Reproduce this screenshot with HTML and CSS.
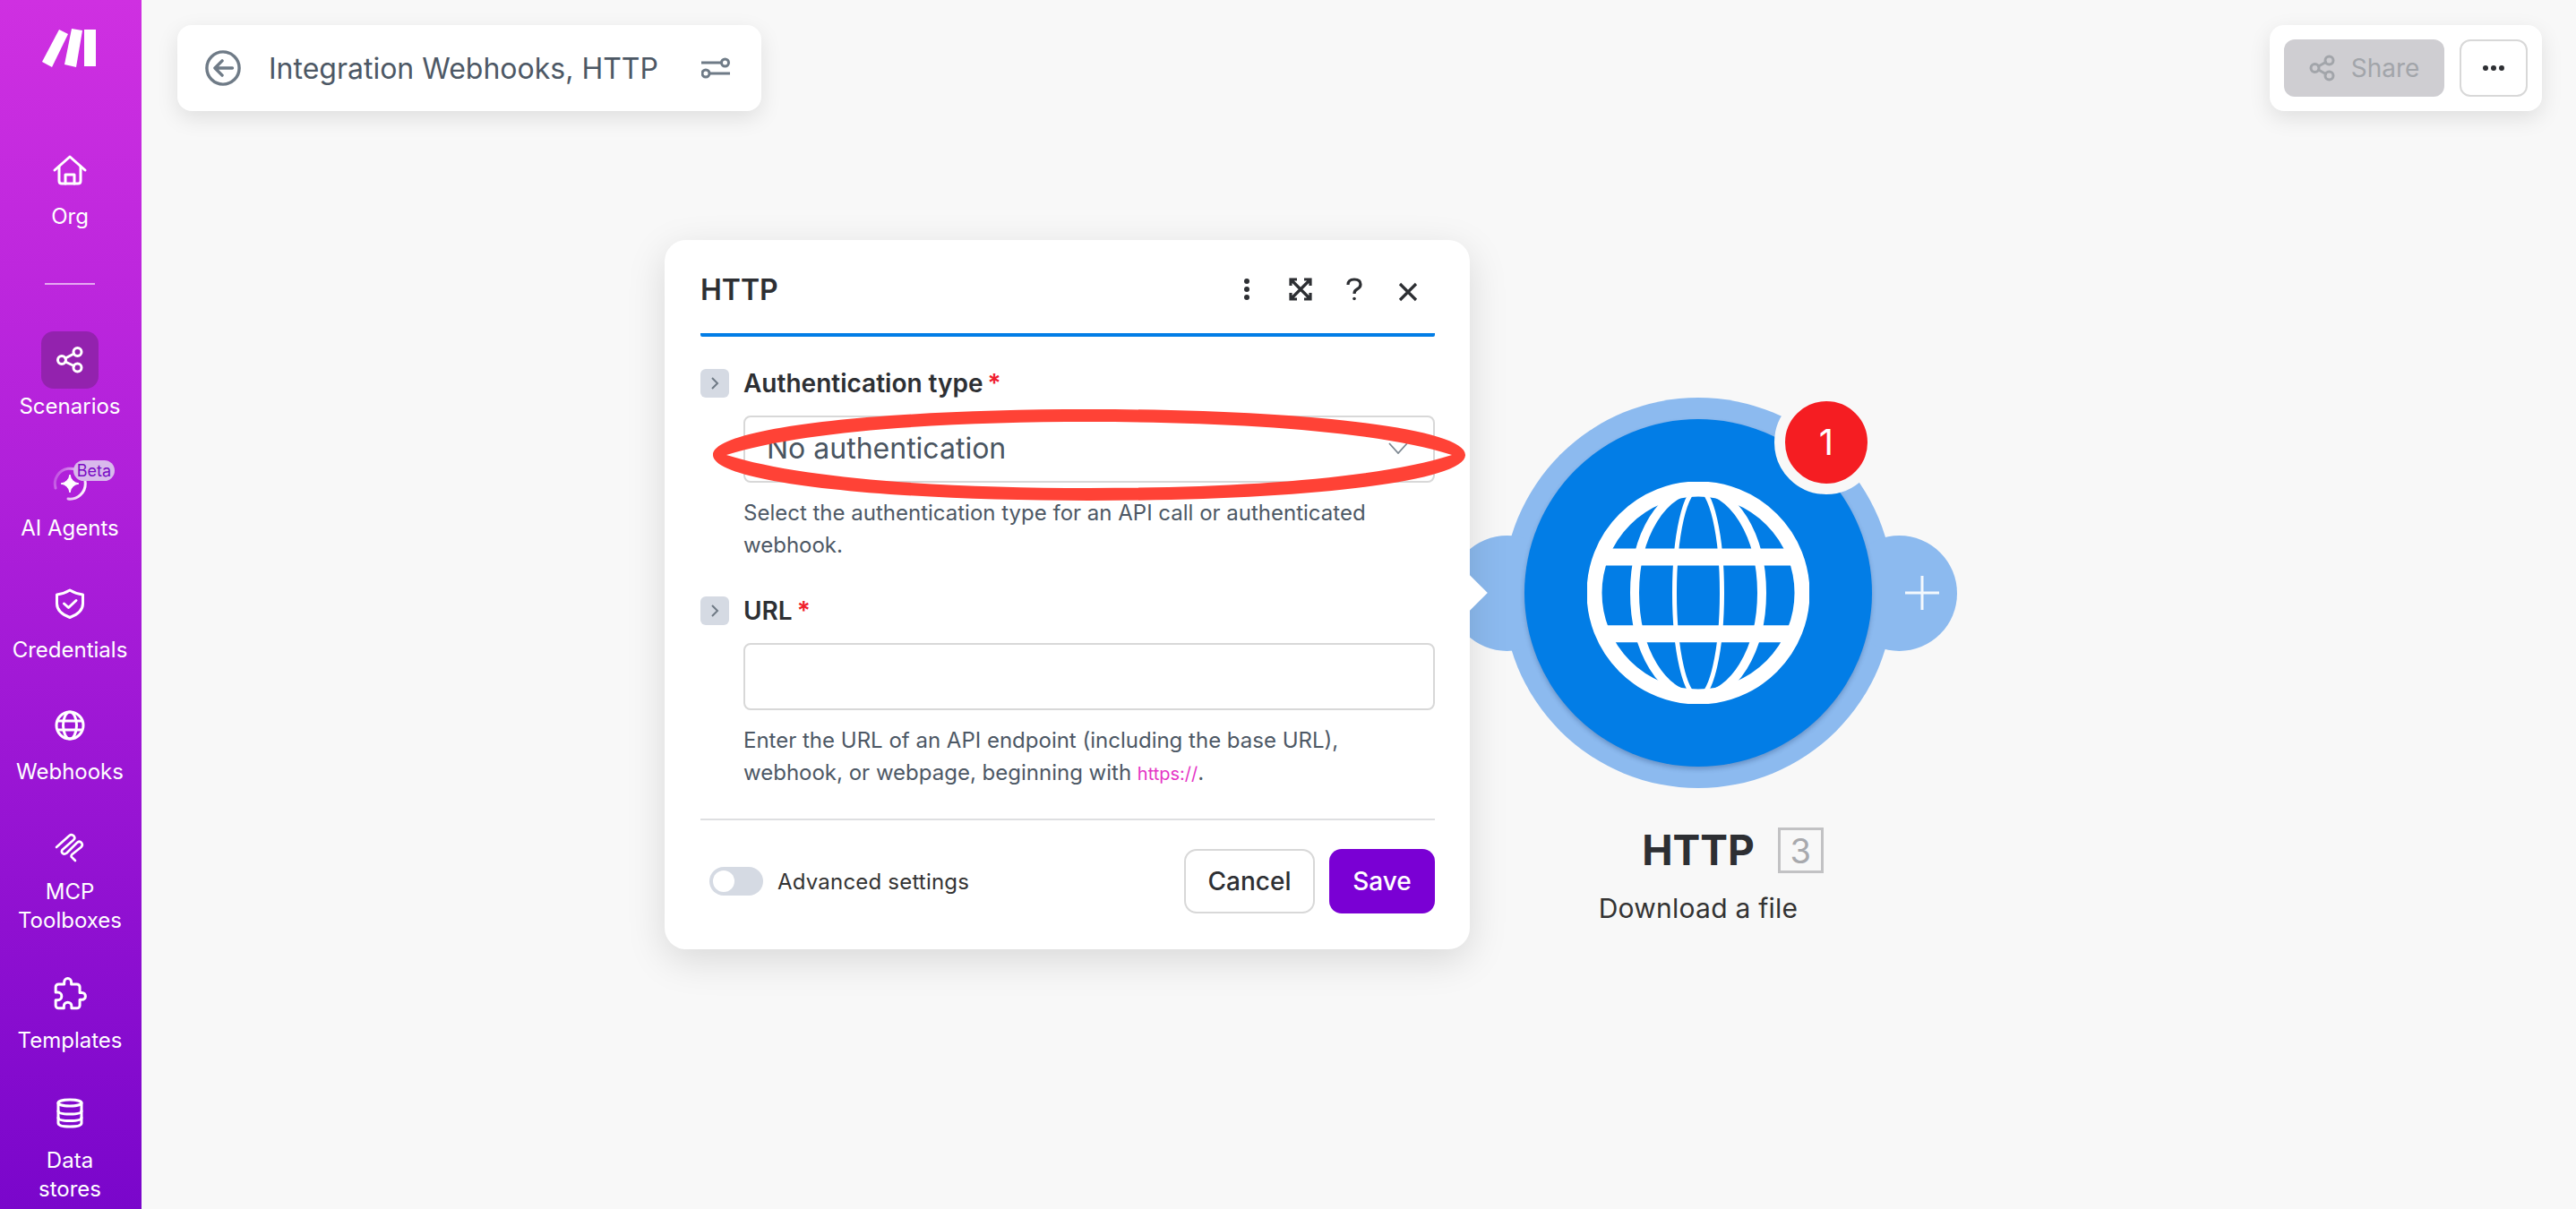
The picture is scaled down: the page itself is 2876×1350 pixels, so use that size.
FILE: index.html
```html
<!DOCTYPE html>
<html lang="en">
<head>
    <meta charset="UTF-8">
    <title>Integration Webhooks, HTTP</title>
    <link rel="stylesheet" href="styles.css">
</head>
<body>
    <aside class="sidebar">
        <svg class="logo" width="64" height="52" viewBox="0 0 64 52" fill="#fff">
            <polygon points="20,5 30,10 12,47 1,41"/>
            <polygon points="34,4 46,6 39,47 26,44"/>
            <polygon points="48,5 61,5 61,46 48,46"/>
        </svg>

        <div class="nav-item">
            <div class="nav-icon">
                <svg width="40" height="40" viewBox="0 0 40 40" class="line-icon">
                    <path d="M3 20 L20 5 L37 20"/>
                    <path d="M8 16 V32 Q8 35 11 35 H29 Q32 35 32 32 V16"/>
                    <path d="M15 35 V25 H25 V35"/>
                </svg>
            </div>
            <div class="nav-label">Org</div>
        </div>

        <div class="nav-divider"></div>

        <div class="nav-item">
            <div class="nav-icon active">
                <svg width="40" height="40" viewBox="0 0 40 40" class="line-icon">
                    <circle cx="11" cy="20" r="4.5"/>
                    <circle cx="28.5" cy="11" r="4.5"/>
                    <circle cx="28.5" cy="28.5" r="4.5"/>
                    <path d="M15 18 L24.5 13 M15 22 L24.5 26.5"/>
                </svg>
            </div>
            <div class="nav-label">Scenarios</div>
        </div>

        <div class="nav-item">
            <div class="nav-icon">
                <svg width="44" height="44" viewBox="0 0 44 44" class="agent-icon">
                    <defs>
                        <linearGradient id="ringFade" x1="1" y1="0.8" x2="0" y2="0.4">
                            <stop offset="0" stop-color="#fff"/>
                            <stop offset="1" stop-color="#fff" stop-opacity="0.25"/>
                        </linearGradient>
                    </defs>
                    <path d="M20 39 A17 17 0 1 0 6 27" fill="none" stroke="url(#ringFade)" stroke-width="3" stroke-linecap="round"/>
                    <path d="M22 12 Q23.5 20.5 32 22 Q23.5 23.5 22 32 Q20.5 23.5 12 22 Q20.5 20.5 22 12 Z" fill="#fff" stroke="#fff" stroke-width="1"/>
                </svg>
                <span class="beta">Beta</span>
            </div>
            <div class="nav-label">AI Agents</div>
        </div>

        <div class="nav-item">
            <div class="nav-icon">
                <svg width="40" height="40" viewBox="0 0 40 40" class="line-icon">
                    <path d="M20 5 C25 8 30 9.5 34.5 10 V20 C34.5 28 28 32.5 20 35.5 C12 32.5 5.5 28 5.5 20 V10 C10 9.5 15 8 20 5 Z"/>
                    <path d="M13.5 20 L18.5 24.5 L27 16.5"/>
                </svg>
            </div>
            <div class="nav-label">Credentials</div>
        </div>

        <div class="nav-item">
            <div class="nav-icon">
                <svg width="40" height="40" viewBox="0 0 40 40" class="line-icon">
                    <circle cx="20" cy="20" r="15"/>
                    <ellipse cx="20" cy="20" rx="7.5" ry="15"/>
                    <path d="M6.5 15 H33.5 M6.5 25 H33.5"/>
                </svg>
            </div>
            <div class="nav-label">Webhooks</div>
        </div>

        <div class="nav-item two-line">
            <div class="nav-icon">
                <svg width="40" height="40" viewBox="0 0 40 40" class="line-icon thin">
                    <path d="M5 20 L19.5 7 Q22 5 24.5 7.5 Q26.5 10 24 12 L11.5 23 Q10 25 12 27 Q14 28.5 16.5 26.5 L28 15 Q30.5 12.5 33 15 Q35 17.5 32.5 20 L22.5 28 Q20.5 30 22.5 31.5 L26 35"/>
                </svg>
            </div>
            <div class="nav-label">MCP<br>Toolboxes</div>
        </div>

        <div class="nav-item">
            <div class="nav-icon">
                <svg width="38" height="38" viewBox="0 0 24 24" class="line-icon puzzle">
                    <path d="M20.5 11H19V7c0-1.1-.9-2-2-2h-4V3.5C13 2.12 11.88 1 10.5 1S8 2.12 8 3.5V5H4c-1.1 0-1.99.9-1.99 2v3.8H3.5c1.49 0 2.7 1.21 2.7 2.7s-1.21 2.7-2.7 2.7H2V20c0 1.1.9 2 2 2h3.8v-1.5c0-1.49 1.21-2.7 2.7-2.7 1.49 0 2.7 1.21 2.7 2.7V22H17c1.1 0 2-.9 2-2v-4h1.5c1.38 0 2.5-1.12 2.5-2.5S21.88 11 20.5 11z"/>
                </svg>
            </div>
            <div class="nav-label">Templates</div>
        </div>

        <div class="nav-item two-line">
            <div class="nav-icon">
                <svg width="40" height="40" viewBox="0 0 40 40" class="line-icon">
                    <ellipse cx="20" cy="5.5" rx="13" ry="3.5"/>
                    <path d="M7 5.5 V28 Q7 32 20 32 Q33 32 33 28 V5.5"/>
                    <path d="M7 14.5 Q7 18 20 18 Q33 18 33 14.5 M7 22 Q7 25.5 20 25.5 Q33 25.5 33 22"/>
                </svg>
            </div>
            <div class="nav-label">Data<br>stores</div>
        </div>
    </aside>

    <main class="canvas">
        <div class="topbar">
            <div class="panel title-panel">
                <svg width="40" height="40" viewBox="0 0 42 42" class="grey-icon">
                    <circle cx="21" cy="21" r="19"/>
                    <path d="M32 21 H12 M20 12.5 L11.5 21 L20 29.5"/>
                </svg>
                <span class="scenario-title">Integration Webhooks, HTTP</span>
                <svg width="32" height="26" viewBox="0 0 32 26" class="grey-icon settings-icon">
                    <path d="M0 7 H22 M10 19 H32"/>
                    <circle cx="26.5" cy="7" r="4"/>
                    <circle cx="5" cy="19" r="4"/>
                </svg>
            </div>
            <div class="panel share-panel">
                <button class="share-btn">
                    <svg width="30" height="30" viewBox="0 0 30 30" class="grey-icon share-icon">
                        <circle cx="6.5" cy="15" r="4.5"/>
                        <circle cx="22.5" cy="6.5" r="4.5"/>
                        <circle cx="22.5" cy="23.5" r="4.5"/>
                        <path d="M10.5 13 L18.5 8.5 M10.5 17 L18.5 21.5"/>
                    </svg>
                    Share
                </button>
                <button class="more-btn">
                    <span class="dot"></span><span class="dot"></span><span class="dot"></span>
                </button>
            </div>
        </div>

        <div class="node">
            <div class="lobe lobe-left"></div>
            <div class="lobe lobe-right">
                <svg width="38" height="38" viewBox="0 0 38 38" class="plus">
                    <path d="M19 0 V38 M0 19 H38"/>
                </svg>
            </div>
            <div class="node-core">
                <svg width="248" height="248" viewBox="-124 -124 248 248" class="globe">
                    <ellipse cx="0" cy="0" rx="71" ry="116" stroke-width="10"/>
                    <ellipse cx="0" cy="0" rx="26.5" ry="116" stroke-width="5"/>
                    <path d="M-109 -40 H109 M-107 45.7 H107" stroke-width="19"/>
                    <circle cx="0" cy="0" r="116" stroke-width="17"/>
                </svg>
            </div>
            <div class="node-badge">1</div>
            <div class="node-label">
                <div class="node-name">HTTP<span class="node-id">3</span></div>
                <div class="node-action">Download a file</div>
            </div>
        </div>

        <section class="modal">
            <header class="modal-head">
                <h2>HTTP</h2>
                <div class="modal-tools">
                    <span class="tool">
                        <svg width="8" height="26" viewBox="0 0 8 26" fill="#2d2f33">
                            <circle cx="4" cy="4" r="3"/>
                            <circle cx="4" cy="13" r="3"/>
                            <circle cx="4" cy="22" r="3"/>
                        </svg>
                    </span>
                    <span class="tool">
                        <svg width="26" height="26" viewBox="0 0 26 26" class="dark-icon">
                            <path d="M2 9 V2 H9 M17 2 H24 V9 M24 17 V24 H17 M9 24 H2 V17 M3 3 L23 23 M23 3 L3 23"/>
                        </svg>
                    </span>
                    <span class="tool">
                        <svg width="18" height="26" viewBox="0 0 18 26" class="dark-icon">
                            <path d="M2 8 Q2 2 9 2 Q16 2 16 7.5 Q16 11 12 13 Q9 14.5 9 18"/>
                            <circle cx="9" cy="23.5" r="1.8" fill="#2d2f33" stroke="none"/>
                        </svg>
                    </span>
                    <span class="tool">
                        <svg width="22" height="22" viewBox="0 0 22 22" class="dark-icon close">
                            <path d="M2 2 L20 20 M20 2 L2 20"/>
                        </svg>
                    </span>
                </div>
            </header>

            <div class="field first">
                <div class="field-head">
                    <span class="chip"><svg width="10" height="16" viewBox="0 0 10 16"><path d="M2 2 L8 8 L2 14"/></svg></span>
                    <label>Authentication type<span class="req">*</span></label>
                </div>
                <div class="field-body">
                    <div class="select-box">
                        No authentication
                        <svg width="22" height="13" viewBox="0 0 22 13" class="caret"><path d="M1 1 L11 12 L21 1"/></svg>
                    </div>
                    <p class="help">Select the authentication type for an API call or authenticated webhook.</p>
                </div>
            </div>

            <div class="field">
                <div class="field-head">
                    <span class="chip"><svg width="10" height="16" viewBox="0 0 10 16"><path d="M2 2 L8 8 L2 14"/></svg></span>
                    <label>URL<span class="req">*</span></label>
                </div>
                <div class="field-body">
                    <div class="input-box"></div>
                    <p class="help">Enter the URL of an API endpoint (including the base URL), webhook, or webpage, beginning with <span class="code">https://</span>.</p>
                </div>
            </div>

            <footer class="modal-foot">
                <div class="adv">
                    <span class="toggle"><span class="knob"></span></span>
                    Advanced settings
                </div>
                <div class="modal-btns">
                    <button class="btn-cancel">Cancel</button>
                    <button class="btn-save">Save</button>
                </div>
            </footer>

            <!-- red marker drawn on top of the screenshot -->
            <svg class="marker" width="840" height="102" viewBox="0 0 840 102">
                <path fill-rule="evenodd" d="M0 51 C0 20 190 0 420 0 C650 0 840 20 840 51 C840 82 650 102 420 102 C190 102 0 82 0 51 Z M15 51 C100 78 260 88 420 88 C580 88 740 78 825 51 C740 24 580 14 420 14 C260 14 100 24 15 51 Z"/>
            </svg>
        </section>
    </main>
</body>
</html>
```

FILE: styles.css
```css
* {
    box-sizing: border-box;
}

html, body {
    margin: 0;
    height: 100%;
}

body {
    display: flex;
    height: 1350px;
    overflow: hidden;
    background: #f8f8f8;
    font-family: Inter, "Liberation Sans", sans-serif;
    color: #2d2f33;
}

button {
    font-family: inherit;
}

/* sidebar */
.sidebar {
    width: 158px;
    flex-shrink: 0;
    height: 1350px;
    padding: 28px 2px 0 0;
    display: flex;
    flex-direction: column;
    align-items: center;
    color: #fff;
    background: linear-gradient(180deg, #cf30e1 0%, #b020da 40%, #7a06cb 100%);
}

.sidebar > * {
    flex-shrink: 0;
}

.logo {
    display: block;
    margin-bottom: 78px;
}

.nav-item {
    width: 100%;
    display: flex;
    flex-direction: column;
    align-items: center;
    margin-bottom: 36px;
}

.nav-item.two-line {
    margin-bottom: 34px;
}

.nav-icon {
    position: relative;
    width: 64px;
    height: 64px;
    display: flex;
    align-items: center;
    justify-content: center;
    border-radius: 14px;
}

.nav-icon.active {
    background: #9322ae;
}

.nav-label {
    margin-top: 4px;
    font-size: 24px;
    line-height: 32px;
    text-align: center;
    white-space: nowrap;
}

.two-line .nav-label {
    margin-top: 2px;
}

.nav-divider {
    width: 56px;
    height: 2px;
    margin: 22px 0 52px;
    background: rgba(255, 255, 255, 0.6);
}

.line-icon {
    fill: none;
    stroke: #fff;
    stroke-width: 3;
    stroke-linecap: round;
    stroke-linejoin: round;
}

.line-icon.thin {
    stroke-width: 2.6;
}

.line-icon.puzzle {
    stroke-width: 1.9;
}

.agent-icon {
    position: relative;
    top: 2px;
}

.beta {
    position: absolute;
    left: 36px;
    top: 8px;
    width: 46px;
    height: 23px;
    border-radius: 12px;
    background: #d9b9ec;
    color: #7a0bc4;
    font-size: 18px;
    line-height: 23px;
    text-align: center;
}

/* canvas */
.canvas {
    position: relative;
    flex: 1;
    height: 1350px;
}

.topbar {
    display: flex;
    justify-content: space-between;
    align-items: flex-start;
    padding: 28px 38px 0 40px;
}

.panel {
    height: 96px;
    display: flex;
    align-items: center;
    background: #fff;
    border-radius: 16px;
    box-shadow: 0 8px 24px rgba(0, 0, 0, 0.1);
}

.title-panel {
    padding: 0 35px 0 31px;
}

.scenario-title {
    margin-left: 31px;
    font-size: 32px;
    color: #4d5865;
    white-space: nowrap;
}

.grey-icon {
    fill: none;
    stroke: #6f7b87;
    stroke-width: 3.6;
    stroke-linecap: round;
    stroke-linejoin: round;
}

.settings-icon {
    margin-left: 48px;
    stroke-width: 3;
}

.share-panel {
    padding: 0 16px;
    gap: 17px;
}

.share-btn {
    width: 179px;
    height: 64px;
    display: flex;
    align-items: center;
    justify-content: center;
    gap: 17px;
    border: none;
    border-radius: 12px;
    background: #cfced2;
    color: #a2a5aa;
    font-size: 28px;
}

.share-icon {
    stroke: #a2a5aa;
    stroke-width: 3;
}

.more-btn {
    width: 76px;
    height: 64px;
    display: flex;
    align-items: center;
    justify-content: center;
    gap: 2.5px;
    background: #fff;
    border: 2px solid #d8d8d8;
    border-radius: 12px;
}

.dot {
    width: 6.5px;
    height: 6.5px;
    border-radius: 50%;
    background: #2d2f33;
}

/* node on the scenario canvas */
.node {
    position: absolute;
    left: 1520px;
    top: 444px;
    width: 436px;
    height: 436px;
    border-radius: 50%;
    background: #8cbaef;
}

.lobe {
    position: absolute;
    top: 153.5px;
    width: 129px;
    height: 129px;
    border-radius: 50%;
    background: #8cbaef;
}

.lobe-left {
    left: -60.5px;
}

.lobe-right {
    left: 377.5px;
    display: flex;
    align-items: center;
    justify-content: flex-end;
    padding-right: 20px;
}

.plus {
    fill: none;
    stroke: #fff;
    stroke-width: 3;
    opacity: 0.9;
}

.node-core {
    position: absolute;
    left: 24px;
    top: 24px;
    width: 388px;
    height: 388px;
    display: flex;
    align-items: center;
    justify-content: center;
    border-radius: 50%;
    background: #027de6;
    box-shadow: 0 3px 5px rgba(30, 60, 110, 0.3);
}

.globe {
    fill: none;
    stroke: #fff;
}

.node-badge {
    position: absolute;
    left: 303px;
    top: -8.5px;
    width: 116px;
    height: 116px;
    display: flex;
    align-items: center;
    justify-content: center;
    border: 12.5px solid #f8f8f8;
    border-radius: 50%;
    background: #f51d22;
    color: #fff;
    font-size: 40px;
}

.node-label {
    position: absolute;
    top: 479px;
    left: 0;
    width: 100%;
    display: flex;
    flex-direction: column;
    align-items: center;
}

.node-name {
    position: relative;
    font-size: 46px;
    font-weight: 700;
    line-height: 52px;
    color: #2d2f33;
}

.node-id {
    position: absolute;
    left: calc(100% + 26px);
    top: 1px;
    width: 51px;
    height: 51px;
    display: flex;
    align-items: center;
    justify-content: center;
    border: 3px solid #c2c2c4;
    font-size: 38px;
    font-weight: 400;
    color: #a8a9ad;
}

.node-action {
    margin-top: 19px;
    font-size: 30px;
    letter-spacing: 0.25px;
    line-height: 40px;
    color: #333;
    white-space: nowrap;
}

/* module settings dialog */
.modal {
    position: absolute;
    left: 584px;
    top: 268px;
    width: 899px;
    padding: 0 39px 40px 40px;
    background: #fff;
    border-radius: 24px;
    box-shadow: 0 12px 44px rgba(0, 0, 0, 0.13);
}

.modal::after {
    content: "";
    position: absolute;
    right: -14px;
    top: 380px;
    width: 28px;
    height: 28px;
    background: #fff;
    transform: rotate(45deg);
}

.modal-head {
    height: 108px;
    padding-top: 6px;
    display: flex;
    align-items: center;
    justify-content: space-between;
    border-bottom: 4px solid #027de6;
    border-radius: 0 0 2px 2px;
}

.modal-head h2 {
    margin: 0;
    font-size: 32px;
    font-weight: 600;
}

.modal-tools {
    display: flex;
    align-items: center;
}

.tool {
    width: 60px;
    display: flex;
    justify-content: center;
}

.dark-icon {
    fill: none;
    stroke: #2d2f33;
    stroke-width: 3.2;
}

.close {
    margin-top: 6px;
}

.field {
    margin-top: 39px;
}

.field.first {
    margin-top: 36px;
}

.field-head {
    display: flex;
    align-items: center;
    gap: 16px;
}

.field-head label {
    font-size: 28px;
    font-weight: 600;
    line-height: 32px;
}

.req {
    margin-left: 5px;
    color: #f0202e;
}

.chip {
    width: 32px;
    height: 32px;
    display: flex;
    align-items: center;
    justify-content: center;
    border-radius: 6px;
    background: #d5dae3;
}

.chip path {
    fill: none;
    stroke: #6f7a85;
    stroke-width: 2;
}

.field-body {
    margin: 20px 0 0 48px;
}

.select-box, .input-box {
    position: relative;
    height: 75px;
    border: 2px solid #d8d8d8;
    border-radius: 8px;
    background: #fff;
}

.select-box {
    display: flex;
    align-items: center;
    justify-content: space-between;
    padding: 0 28px 2px 24px;
    font-size: 32px;
    color: #4a5561;
}

.caret {
    fill: none;
    stroke: #7d8791;
    stroke-width: 1.8;
}

.help {
    margin: 16px 0 0;
    font-size: 24px;
    line-height: 36px;
    color: #4d5865;
}

.code {
    font-size: 20px;
    color: #e535c5;
}

.modal-foot {
    display: flex;
    align-items: center;
    justify-content: space-between;
    margin-top: 32px;
    padding: 32px 0 0 10px;
    border-top: 2px solid #dedfe1;
}

.adv {
    display: flex;
    align-items: center;
    gap: 16px;
    font-size: 24px;
    letter-spacing: 0.2px;
    color: #333;
}

.toggle {
    width: 60px;
    height: 32px;
    padding: 4px;
    border-radius: 16px;
    background: #d5dae3;
}

.knob {
    display: block;
    width: 24px;
    height: 24px;
    border-radius: 50%;
    background: #fff;
}

.modal-btns {
    display: flex;
    gap: 16px;
}

.btn-cancel, .btn-save {
    height: 72px;
    border-radius: 14px;
    font-size: 28px;
    font-weight: 500;
}

.btn-cancel {
    width: 146px;
    background: #fff;
    border: 2px solid #d8d8d8;
    color: #2d2f33;
}

.btn-save {
    width: 118px;
    background: #7a00d4;
    border: none;
    color: #fff;
}

.marker {
    position: absolute;
    left: 54px;
    top: 189px;
    fill: #ff4236;
}
```
